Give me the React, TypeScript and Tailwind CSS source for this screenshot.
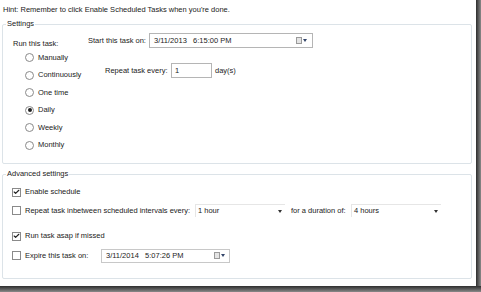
import { Check } from 'lucide-react';

function Radio({ label, checked }: { label: string; checked?: boolean }) {
  return (
    <div className="flex h-[17.5px] items-center gap-[4px]">
      <span className="flex h-[9px] w-[9px] items-center justify-center rounded-full border border-[#8a8a8a] bg-white">
        {checked && <span className="h-[4px] w-[4px] rounded-full bg-[#222]" />}
      </span>
      <span>{label}</span>
    </div>
  );
}

function CheckBox({ checked }: { checked?: boolean }) {
  return (
    <span className="flex h-[9px] w-[9px] shrink-0 items-center justify-center border border-[#8a8a8a] bg-white">
      {checked && <Check className="h-[8px] w-[8px] text-[#222]" strokeWidth={4} />}
    </span>
  );
}

function CalendarDrop() {
  return (
    <span className="flex items-center gap-[1px]">
      <span className="h-[7px] w-[6px] border border-[#9a9a9a] bg-[#e4e4e4]" />
      <span className="h-0 w-0 border-x-[2.5px] border-t-[3px] border-x-transparent border-t-[#33456a]" />
    </span>
  );
}

function Select({ value, width }: { value: string; width: string }) {
  return (
    <div className={`flex h-[13px] items-center justify-between border-l border-t border-[#e6e6e6] pl-[2px] pr-[3px] ${width}`}>
      <span>{value}</span>
      <span className="h-0 w-0 border-x-[2.5px] border-t-[3px] border-x-transparent border-t-[#333]" />
    </div>
  );
}

function Group({ title, className, children }: { title: string; className: string; children: React.ReactNode }) {
  return (
    <div className={`relative rounded-[2px] border border-[#dce3e8] ${className}`}>
      <span className="absolute left-[3px] top-[-6px] bg-white px-[1px] leading-[10px]">{title}</span>
      {children}
    </div>
  );
}

export default function App() {
  return (
    <div
      className="flex h-[292px] w-[481px] flex-col overflow-hidden whitespace-nowrap bg-white text-[7.5px] leading-[10px] text-[#222]"
      style={{ fontFamily: '"Liberation Sans", Arial, sans-serif' }}
    >
      <div className="flex h-[286px]">
        <div className="flex w-[476px] flex-col pl-[2px] pr-[4px] pt-[5px]">
          <div className="pl-[1px]">Hint: Remember to click Enable Scheduled Tasks when you're done.</div>

          <Group title="Settings" className="mt-[9px] h-[140px] pl-[10px] pt-[14px]">
            <div className="flex">
              <div className="w-[75px]">
                <div>Run this task:</div>
                <div className="pl-[12px]">
                  <Radio label="Manually" />
                  <Radio label="Continuously" />
                  <Radio label="One time" />
                  <Radio label="Daily" checked />
                  <Radio label="Weekly" />
                  <Radio label="Monthly" />
                </div>
              </div>
              <div className="-mt-[6px] flex flex-col">
                <div className="flex items-center">
                  <span className="w-[61px]">Start this task on:</span>
                  <div className="flex h-[15px] w-[164px] items-center justify-between border border-[#b5b5b5] pl-[4px] pr-[5px]">
                    <span className="whitespace-pre">3/11/2013   6:15:00 PM</span>
                    <CalendarDrop />
                  </div>
                </div>
                <div className="mt-[15px] flex items-center pl-[17px]">
                  <span className="w-[66px]">Repeat task every:</span>
                  <div className="flex h-[15px] w-[41px] items-center border border-[#b5b5b5] pl-[3px]">1</div>
                  <span className="ml-[3px]">day(s)</span>
                </div>
              </div>
            </div>
          </Group>

          <Group title="Advanced settings" className="mt-[10px] h-[105px] pl-[9px] pt-[11px]">
            <div className="flex h-[12px] items-center gap-[4px]">
              <CheckBox checked />
              <span>Enable schedule</span>
            </div>
            <div className="mt-[6px] flex h-[13px] items-center">
              <div className="flex w-[183px] items-center gap-[4px]">
                <CheckBox />
                <span>Repeat task inbetween scheduled intervals every:</span>
              </div>
              <Select value="1 hour" width="w-[90px]" />
              <span className="ml-[6px] w-[60px]">for a duration of:</span>
              <Select value="4 hours" width="w-[90px]" />
            </div>
            <div className="mt-[13px] flex h-[12px] items-center gap-[4px]">
              <CheckBox checked />
              <span>Run task asap if missed</span>
            </div>
            <div className="mt-[7px] flex h-[13px] items-center">
              <div className="flex w-[89px] items-center gap-[4px]">
                <CheckBox />
                <span>Expire this task on:</span>
              </div>
              <div className="flex h-[14px] w-[129px] items-center justify-between border border-[#c8c8c8] pl-[4px] pr-[4px]">
                <span className="whitespace-pre">3/11/2014   5:07:26 PM</span>
                <CalendarDrop />
              </div>
            </div>
          </Group>
        </div>
        <div className="w-[5px] bg-gradient-to-r from-[#2e2e2e] to-[#8a8a8a]" />
      </div>
      <div className="h-[6px] bg-gradient-to-b from-[#2e2e2e] to-[#8a8a8a]" />
    </div>
  );
}
